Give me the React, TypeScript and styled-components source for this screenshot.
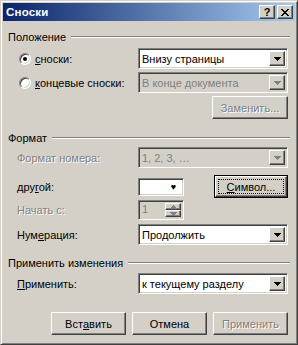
import React from 'react';
import styled, { createGlobalStyle } from 'styled-components';

const GlobalStyle = createGlobalStyle`
  html, body {
    margin: 0;
    padding: 0;
    background: #d4d0c8;
  }
  body {
    font-family: "Liberation Sans", Arial, sans-serif;
    font-size: 11px;
    color: #000;
  }
`;

const raised = `
  border: 1px solid;
  border-color: #fff #404040 #404040 #fff;
  box-shadow: inset -1px -1px #808080, inset 1px 1px #d4d0c8;
`;

const sunken = `
  border: 1px solid;
  border-color: #808080 #fff #fff #808080;
  box-shadow: inset 1px 1px #404040, inset -1px -1px #d4d0c8;
`;

const Window = styled.div`
  box-sizing: border-box;
  width: 298px;
  height: 345px;
  background: #d4d0c8;
  border: 1px solid;
  border-color: #d4d0c8 #404040 #404040 #d4d0c8;
  box-shadow: inset 1px 1px #fff, inset -1px -1px #808080;
  padding: 2px;
  display: flex;
  flex-direction: column;
`;

const TitleBar = styled.div`
  height: 18px;
  flex: none;
  display: flex;
  align-items: center;
  padding: 0 2px 0 3px;
  background: linear-gradient(to right, #0a246a, #a6caf0);
  color: #fff;
  font-weight: bold;
  font-size: 11.5px;
`;

const Title = styled.span`
  flex: 1;
  letter-spacing: 0.2px;
`;

const CaptionButton = styled.div`
  box-sizing: border-box;
  width: 16px;
  height: 14px;
  margin-left: 2px;
  background: #d4d0c8;
  ${raised}
  display: flex;
  align-items: center;
  justify-content: center;
  color: #000;
  font-weight: bold;
  font-size: 11px;
  line-height: 1;
`;

const Body = styled.div`
  display: flex;
  flex-direction: column;
  padding: 0 5px;
`;

const GroupHeader = styled.div<{ $top: number }>`
  display: flex;
  align-items: center;
  height: 13px;
  margin-top: ${(p) => p.$top}px;
  gap: 5px;
`;

const GroupLine = styled.div`
  flex: 1;
  border-top: 1px solid #808080;
  border-bottom: 1px solid #fff;
`;

const Row = styled.div<{ $top: number; $height: number }>`
  display: flex;
  align-items: center;
  height: ${(p) => p.$height}px;
  margin-top: ${(p) => p.$top}px;
  padding-right: 2px;
`;

const Label = styled.div<{ $disabled?: boolean }>`
  box-sizing: border-box;
  width: 130px;
  padding-left: 9px;
  white-space: nowrap;
  color: ${(p) => (p.$disabled ? '#808080' : '#000')};
  text-shadow: ${(p) => (p.$disabled ? '1px 1px #fff' : 'none')};
`;

const RadioLabel = styled.label`
  box-sizing: border-box;
  width: 130px;
  padding-left: 11px;
  display: flex;
  align-items: center;
  gap: 4px;
  white-space: nowrap;
`;

const Radio = styled.span<{ $checked?: boolean }>`
  box-sizing: border-box;
  width: 12px;
  height: 12px;
  border-radius: 50%;
  border: 1px solid;
  border-color: #808080 #fff #fff #808080;
  box-shadow: inset 1px 1px #404040, inset -1px -1px #d4d0c8;
  background: #fff;
  display: flex;
  align-items: center;
  justify-content: center;
  &::after {
    content: '';
    width: 4px;
    height: 4px;
    border-radius: 50%;
    background: ${(p) => (p.$checked ? '#000' : 'transparent')};
  }
`;

const Combo = styled.div<{ $disabled?: boolean }>`
  box-sizing: border-box;
  width: 150px;
  height: 100%;
  display: flex;
  align-items: center;
  padding: 2px;
  ${sunken}
  background: ${(p) => (p.$disabled ? '#d4d0c8' : '#fff')};
  color: ${(p) => (p.$disabled ? '#808080' : '#000')};
`;

const ComboText = styled.span`
  flex: 1;
  padding-left: 1px;
  white-space: nowrap;
  overflow: hidden;
`;

const ArrowButton = styled.div`
  box-sizing: border-box;
  width: 16px;
  height: 100%;
  background: #d4d0c8;
  ${raised}
  display: flex;
  align-items: center;
  justify-content: center;
`;

const Arrow = ({ color = '#000', up = false }: { color?: string; up?: boolean }) => (
  <svg width="7" height="4" viewBox="0 0 7 4" style={{ display: 'block' }}>
    <polygon
      points={up ? '3.5,0 7,4 0,4' : '0,0 7,0 3.5,4'}
      fill={color}
      shapeRendering="crispEdges"
    />
  </svg>
);

const Button = styled.div<{ $disabled?: boolean; $width?: number; $default?: boolean }>`
  box-sizing: border-box;
  width: ${(p) => p.$width ?? 75}px;
  height: 23px;
  background: #d4d0c8;
  display: flex;
  align-items: center;
  justify-content: center;
  white-space: nowrap;
  color: ${(p) => (p.$disabled ? '#808080' : '#000')};
  text-shadow: ${(p) => (p.$disabled ? '1px 1px #fff' : 'none')};
  ${(p) =>
    p.$default
      ? `border: 1px solid #000; padding: 0;`
      : raised}
`;

const DefaultInner = styled.div`
  box-sizing: border-box;
  width: 100%;
  height: 100%;
  ${raised}
  display: flex;
  align-items: center;
  justify-content: center;
  padding: 2px;
`;

const FocusRect = styled.div`
  box-sizing: border-box;
  width: 100%;
  height: 100%;
  border: 1px dotted #000;
  display: flex;
  align-items: center;
  justify-content: center;
`;

const ButtonRow = styled.div<{ $top: number }>`
  display: flex;
  justify-content: flex-end;
  gap: 6px;
  margin-top: ${(p) => p.$top}px;
  padding-right: 2px;
`;

const Spacer = styled.div`
  flex: 1;
`;

const SymbolBox = styled.div`
  box-sizing: border-box;
  width: 46px;
  height: 18px;
  ${sunken}
  background: #fff;
  display: flex;
  align-items: center;
  justify-content: flex-end;
  padding-right: 7px;
  font-size: 9px;
`;

const Spinner = styled.div`
  box-sizing: border-box;
  width: 46px;
  height: 100%;
  ${sunken}
  background: #d4d0c8;
  color: #808080;
  display: flex;
  padding: 2px;
`;

const SpinButtons = styled.div`
  width: 16px;
  display: flex;
  flex-direction: column;
`;

const SpinButton = styled.div`
  box-sizing: border-box;
  flex: 1;
  ${raised}
  display: flex;
  align-items: center;
  justify-content: center;
`;

const Key = styled.span`
  text-decoration: underline;
`;

export default function App() {
  return (
    <>
      <GlobalStyle />
      <Window>
        <TitleBar>
          <Title>Сноски</Title>
          <CaptionButton>?</CaptionButton>
          <CaptionButton>
            <svg width="8" height="7" viewBox="0 0 8 7">
              <path
                d="M0 0h2v1h1v1h2v-1h1v-1h2v1h-1v1h-1v1h-1v1h1v1h1v1h1v1h-2v-1h-1v-1h-2v1h-1v1h-2v-1h1v-1h1v-1h1v-1h-1v-1h-1v-1h-1z"
                fill="#000"
              />
            </svg>
          </CaptionButton>
        </TitleBar>
        <Body>
          <GroupHeader $top={9}>
            <span>Положение</span>
            <GroupLine />
          </GroupHeader>
          <Row $top={5} $height={21}>
            <RadioLabel>
              <Radio $checked />
              <span>
                <Key>с</Key>носки:
              </span>
            </RadioLabel>
            <Combo>
              <ComboText>Внизу страницы</ComboText>
              <ArrowButton>
                <Arrow />
              </ArrowButton>
            </Combo>
          </Row>
          <Row $top={3} $height={21}>
            <RadioLabel>
              <Radio />
              <span>
                <Key>к</Key>онцевые сноски:
              </span>
            </RadioLabel>
            <Combo $disabled>
              <ComboText>В конце документа</ComboText>
              <ArrowButton>
                <Arrow color="#808080" />
              </ArrowButton>
            </Combo>
          </Row>
          <ButtonRow $top={3}>
            <Button $disabled $width={76}>
              Заменить...
            </Button>
          </ButtonRow>

          <GroupHeader $top={12}>
            <span>Формат</span>
            <GroupLine />
          </GroupHeader>
          <Row $top={3} $height={21}>
            <Label $disabled>Формат номера:</Label>
            <Combo $disabled>
              <ComboText>1, 2, 3, …</ComboText>
              <ArrowButton>
                <Arrow color="#808080" />
              </ArrowButton>
            </Combo>
          </Row>
          <Row $top={7} $height={23}>
            <Label>
              дру<Key>г</Key>ой:
            </Label>
            <SymbolBox>♥</SymbolBox>
            <Spacer />
            <Button $default $width={74}>
              <DefaultInner>
                <FocusRect>
                  <Key>С</Key>имвол...
                </FocusRect>
              </DefaultInner>
            </Button>
          </Row>
          <Row $top={2} $height={20}>
            <Label $disabled>Начать с:</Label>
            <Spinner>
              <ComboText>1</ComboText>
              <SpinButtons>
                <SpinButton>
                  <Arrow color="#808080" up />
                </SpinButton>
                <SpinButton>
                  <Arrow color="#808080" />
                </SpinButton>
              </SpinButtons>
            </Spinner>
          </Row>
          <Row $top={4} $height={21}>
            <Label>
              Нум<Key>е</Key>рация:
            </Label>
            <Combo>
              <ComboText>Продолжить</ComboText>
              <ArrowButton>
                <Arrow />
              </ArrowButton>
            </Combo>
          </Row>

          <GroupHeader $top={11}>
            <span>Применить изменения</span>
            <GroupLine />
          </GroupHeader>
          <Row $top={4} $height={21}>
            <Label>
              <Key>П</Key>рименить:
            </Label>
            <Combo>
              <ComboText>к текущему разделу</ComboText>
              <ArrowButton>
                <Arrow />
              </ArrowButton>
            </Combo>
          </Row>

          <ButtonRow $top={18}>
            <Button>
              Вст<Key>а</Key>вить
            </Button>
            <Button>Отмена</Button>
            <Button $disabled>Применить</Button>
          </ButtonRow>
        </Body>
      </Window>
    </>
  );
}
